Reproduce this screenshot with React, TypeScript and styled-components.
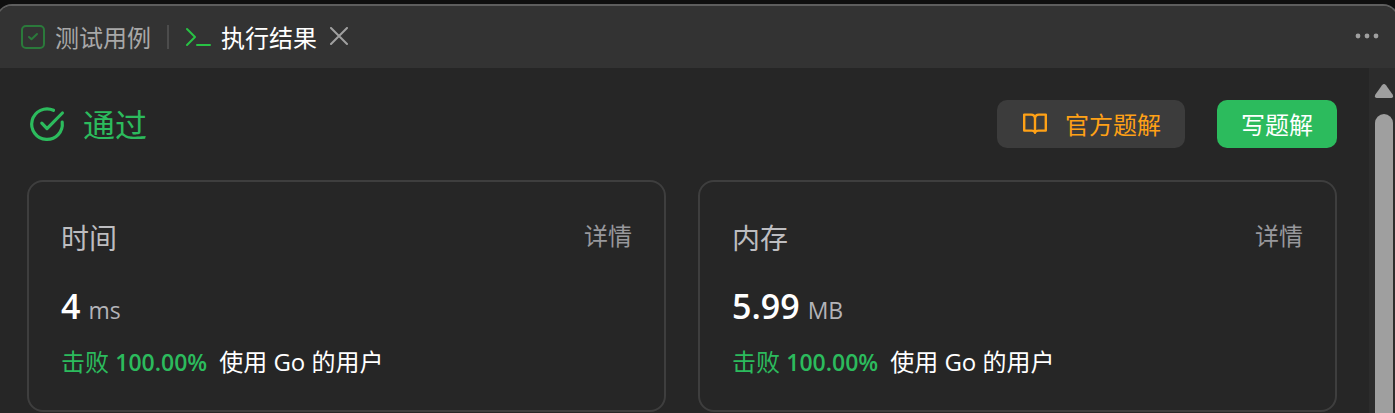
import React from "react";
import styled, { createGlobalStyle } from "styled-components";

const GlobalStyle = createGlobalStyle`
  * { box-sizing: border-box; }
  body {
    margin: 0;
    background: #0f0f0f;
    color: #fff;
    font-family: "Open Sans", "Noto Sans CJK SC", sans-serif;
    font-size: 24px;
    line-height: 32px;
  }
  button { font: inherit; color: inherit; background: none; border: 0; padding: 0; cursor: pointer; }
  h2, h3, p { margin: 0; font-weight: 400; }
  svg { display: block; flex: none; }
`;

const Page = styled.div`
  min-height: 100vh;
  padding-top: 4px;
  display: flex;
  flex-direction: column;
  overflow: hidden;
`;

const Panel = styled.section`
  flex: 1;
  display: flex;
  flex-direction: column;
  margin: 0 -4px;
  border: 2px solid #5e5e5e;
  border-bottom: 0;
  border-radius: 16px 16px 0 0;
  background: #262626;
  overflow: hidden;
`;

const TabBar = styled.header`
  display: flex;
  align-items: center;
  height: 62px;
  padding: 0 18px 0 23px;
  background: #333;
`;

const Tab = styled.button<{ $active?: boolean }>`
  display: flex;
  align-items: center;
  gap: 10px;
  color: ${(p) => (p.$active ? "#fff" : "#a8a8a8")};
`;

const Label = styled.span`
  padding-top: 2px;
`;

const Divider = styled.span`
  width: 2px;
  height: 24px;
  margin: 0 16px;
  background: #4c4c4c;
`;

const CloseButton = styled.button`
  margin-left: 12px;
`;

const MoreButton = styled.button`
  margin-left: auto;
`;

const Body = styled.div`
  flex: 1;
  display: flex;
`;

const Content = styled.main`
  flex: 1;
  min-width: 0;
  padding: 32px 32px 2px 29px;
`;

const Summary = styled.div`
  display: flex;
  align-items: center;
  gap: 32px;
  margin-bottom: 32px;
`;

const Status = styled.h2`
  display: flex;
  align-items: center;
  gap: 16px;
  height: 48px;
  margin-right: auto;
  font-size: 32px;
  color: #2cbb5d;
`;

const ActionButton = styled.button<{ $primary?: boolean }>`
  display: flex;
  align-items: center;
  gap: 16px;
  height: 48px;
  padding: 0 24px;
  border-radius: 10px;
  background: ${(p) => (p.$primary ? "#2cbb5d" : "#3c3c3c")};
  color: ${(p) => (p.$primary ? "#fff" : "#ffa116")};
`;

const Cards = styled.div`
  display: grid;
  grid-template-columns: 1fr 1fr;
  gap: 32px;
`;

const Card = styled.article`
  padding: 32px;
  border: 2px solid #3e3e3e;
  border-radius: 16px;
`;

const CardHead = styled.div`
  display: flex;
  align-items: center;
  justify-content: space-between;
  height: 48px;
  margin-bottom: 20px;
`;

const CardTitle = styled.h3`
  font-size: 28px;
  color: #bdbdc0;
`;

const DetailButton = styled.button`
  height: 48px;
  padding-bottom: 4px;
  color: #98989c;
`;

const Value = styled.p`
  display: flex;
  align-items: baseline;
  gap: 8px;
  line-height: 48px;
  margin-bottom: 12px;
`;

const Figure = styled.strong`
  font-size: 34px;
  font-weight: 600;
`;

const Unit = styled.span`
  font-size: 23px;
  color: #b3b3b8;
`;

const Beats = styled.p`
  display: flex;
  align-items: baseline;
  gap: 12px;
`;

const Percent = styled.span`
  color: #2cbb5d;
`;

const Rate = styled.span`
  font-size: 23px;
  font-weight: 600;
`;

const ScrollTrack = styled.div`
  display: flex;
  flex-direction: column;
  align-items: center;
  width: 28px;
  padding: 16px 0 0 2px;
  background: #2c2c2c;
`;

const ScrollThumb = styled.div`
  flex: 1;
  width: 18px;
  margin-top: 16px;
  border-radius: 9px 9px 0 0;
  background: #9f9f9f;
`;

const CheckBoxIcon = () => (
  <svg width="24" height="24" viewBox="0 0 24 24" fill="none" stroke="#2b7a3b" strokeWidth="2" strokeLinecap="round" strokeLinejoin="round">
    <rect x="1" y="1" width="22" height="22" rx="4" />
    <path d="M8 12l2.5 2.3L16 9" />
  </svg>
);

const TerminalIcon = () => (
  <svg width="26" height="24" viewBox="0 0 26 24" fill="none" stroke="#28c244" strokeWidth="2" strokeLinecap="round" strokeLinejoin="round">
    <path d="M2 4l8 8-8 8M12 20h13" />
  </svg>
);

const CloseIcon = () => (
  <svg width="20" height="20" viewBox="0 0 20 20" stroke="#a0a0a0" strokeWidth="2" strokeLinecap="round">
    <path d="M2 1l16 16M18 1L2 17" />
  </svg>
);

const MoreIcon = () => (
  <svg width="24" height="24" viewBox="0 0 24 24" fill="#a0a0a0">
    <circle cx="3" cy="11" r="2.4" />
    <circle cx="12" cy="11" r="2.4" />
    <circle cx="21" cy="11" r="2.4" />
  </svg>
);

const PassedIcon = () => (
  <svg width="40" height="40" viewBox="0 0 40 40" fill="none" stroke="#2cbb5d" strokeWidth="3.2" strokeLinecap="round" strokeLinejoin="round">
    <path d="M26.5 6.3A15.3 15.3 0 1 0 35.2 18.2" />
    <path d="M14.8 19.2l5.2 5.4L35.4 9" />
  </svg>
);

const BookIcon = () => (
  <svg width="28" height="28" viewBox="0 0 28 28" fill="none" stroke="#ffa116" strokeWidth="2.4" strokeLinejoin="round" strokeLinecap="round">
    <path d="M14 22.8V8.7Q14 4.6 10 4.6H3.2V20.6H10.5Q13.4 20.6 14 22.8Q14.6 20.6 17.5 20.6H24.8V4.6H18Q14 4.6 14 8.7" />
  </svg>
);

const ScrollUpIcon = () => (
  <svg width="20" height="14" viewBox="0 0 20 14" fill="#9f9f9f">
    <path d="M8 1.2Q10-1 12 1.2L18.6 10.5Q20 14 17.4 14H2.6Q0 14 1.4 10.5Z" />
  </svg>
);

const metrics = [
  { name: "时间", value: "4", unit: "ms" },
  { name: "内存", value: "5.99", unit: "MB" },
];

export default function App() {
  return (
    <>
      <GlobalStyle />
      <Page>
        <Panel>
          <TabBar>
            <Tab><CheckBoxIcon /><Label>测试用例</Label></Tab>
            <Divider />
            <Tab $active><TerminalIcon /><Label>执行结果</Label></Tab>
            <CloseButton aria-label="关闭"><CloseIcon /></CloseButton>
            <MoreButton aria-label="更多"><MoreIcon /></MoreButton>
          </TabBar>
          <Body>
            <Content>
              <Summary>
                <Status><PassedIcon /><Label>通过</Label></Status>
                <ActionButton><BookIcon /><Label>官方题解</Label></ActionButton>
                <ActionButton $primary><Label>写题解</Label></ActionButton>
              </Summary>
              <Cards>
                {metrics.map((m) => (
                  <Card key={m.name}>
                    <CardHead>
                      <CardTitle>{m.name}</CardTitle>
                      <DetailButton>详情</DetailButton>
                    </CardHead>
                    <Value>
                      <Figure>{m.value}</Figure>
                      <Unit>{m.unit}</Unit>
                    </Value>
                    <Beats>
                      <Percent>击败 <Rate>100.00%</Rate></Percent>
                      <span>使用 Go 的用户</span>
                    </Beats>
                  </Card>
                ))}
              </Cards>
            </Content>
            <ScrollTrack>
              <ScrollUpIcon />
              <ScrollThumb />
            </ScrollTrack>
          </Body>
        </Panel>
      </Page>
    </>
  );
}
